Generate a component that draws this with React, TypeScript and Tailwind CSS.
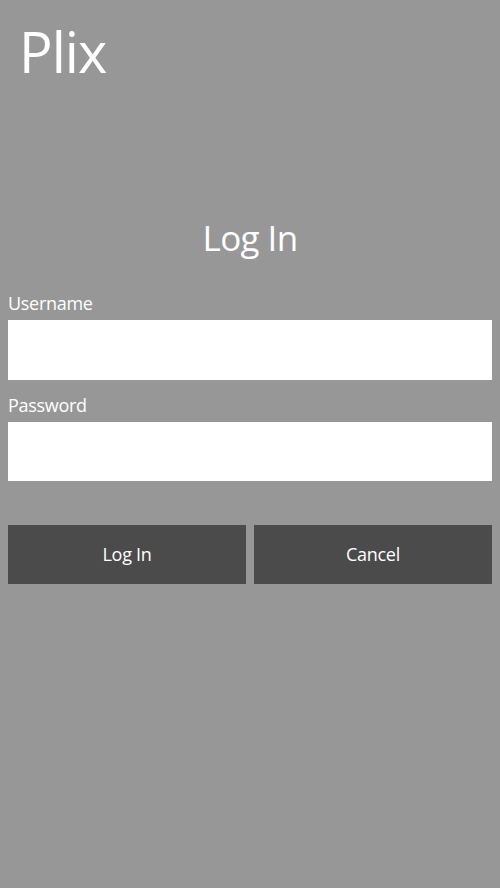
export default function App() {
  return (
    <div className="flex h-[888px] w-[500px] flex-col bg-[#979797] px-2 font-['Open_Sans',sans-serif] text-white">
      <h1 className="mt-[13px] pl-[11px] text-[56px] leading-[76px] tracking-[-1px]">Plix</h1>

      <h2 className="mt-[128px] text-center text-[35px] leading-[42px] tracking-[-0.6px]">Log In</h2>

      <form className="mt-[29px] flex flex-col" onSubmit={(e) => e.preventDefault()}>
        <label className="text-[18px] leading-[30px] tracking-[-0.3px]">
          Username
          <input type="text" className="mt-[2px] block h-[60px] w-full bg-white text-black outline-none" />
        </label>
        <label className="mt-[10px] text-[18px] leading-[30px] tracking-[-0.3px]">
          Password
          <input type="password" className="mt-[2px] block h-[59px] w-full bg-white text-black outline-none" />
        </label>

        <div className="mt-[44px] grid grid-cols-2 gap-2">
          <button type="submit" className="h-[59px] bg-[#4b4b4b] text-[18px] tracking-[-0.3px] text-white">
            Log In
          </button>
          <button type="button" className="h-[59px] bg-[#4b4b4b] text-[18px] tracking-[-0.3px] text-white">
            Cancel
          </button>
        </div>
      </form>
    </div>
  );
}
